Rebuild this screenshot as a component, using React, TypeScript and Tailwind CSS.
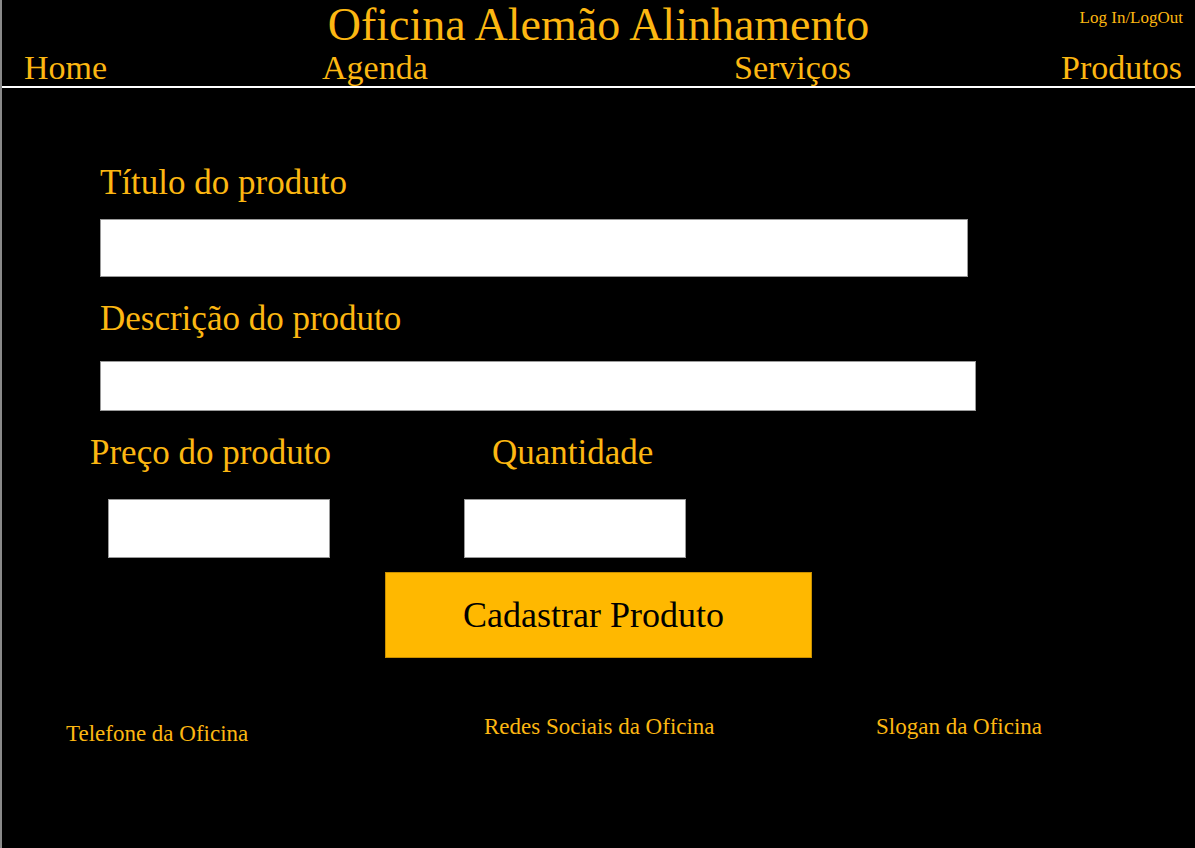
export default function App() {
    return (
        <div
            className="w-[1195px] h-[848px] bg-black border-l-2 border-[#8a8a8a] text-[#fcb712] overflow-hidden"
            style={{ fontFamily: '"Liberation Serif", "DejaVu Serif", serif' }}
        >
            <header className="border-b-2 border-white">
                <div className="grid grid-cols-[1fr_auto_1fr]">
                    <div />
                    <h1 className="text-[46px] leading-[50px]">Oficina Alemão Alinhamento</h1>
                    <div className="flex justify-end pr-[12px] pt-[8px]">
                        <a className="text-[17px] leading-[20px]">Log In/LogOut</a>
                    </div>
                </div>
                <nav className="flex text-[34px] leading-[36px]">
                    <a className="w-[320px] pl-[22px]">Home</a>
                    <a className="w-[412px]">Agenda</a>
                    <a>Serviços</a>
                    <a className="ml-auto pr-[13px]">Produtos</a>
                </nav>
            </header>

            <main className="flex flex-col">
                <div className="flex flex-col pl-[98px]">
                    <label className="mt-[75px] text-[35px] leading-[40px]">Título do produto</label>
                    <input className="mt-[16px] w-[868px] h-[58px] bg-white border border-[#9a9a9a]" />
                    <label className="mt-[22px] text-[35px] leading-[40px]">Descrição do produto</label>
                    <input className="mt-[22px] w-[876px] h-[50px] bg-white border border-[#9a9a9a]" />
                </div>

                <div className="flex mt-[22px]">
                    <div className="flex flex-col pl-[88px] w-[462px]">
                        <label className="text-[35px] leading-[40px]">Preço do produto</label>
                        <input className="mt-[26px] ml-[18px] w-[222px] h-[59px] bg-white border border-[#9a9a9a]" />
                    </div>
                    <div className="flex flex-col">
                        <label className="ml-[28px] text-[35px] leading-[40px]">Quantidade</label>
                        <input className="mt-[26px] w-[222px] h-[59px] bg-white border border-[#9a9a9a]" />
                    </div>
                </div>

                <div className="flex pl-[383px] mt-[14px]">
                    <button className="w-[427px] h-[86px] bg-[#ffb800] border border-[#c98f00] text-black text-[36px] leading-[40px] pr-[10px]">
                        Cadastrar Produto
                    </button>
                </div>

                <footer className="flex items-start text-[23px] leading-[28px] mt-[55px]">
                    <p className="w-[482px] pl-[64px] mt-[7px]">Telefone da Oficina</p>
                    <p className="w-[392px]">Redes Sociais da Oficina</p>
                    <p>Slogan da Oficina</p>
                </footer>
            </main>
        </div>
    );
}
